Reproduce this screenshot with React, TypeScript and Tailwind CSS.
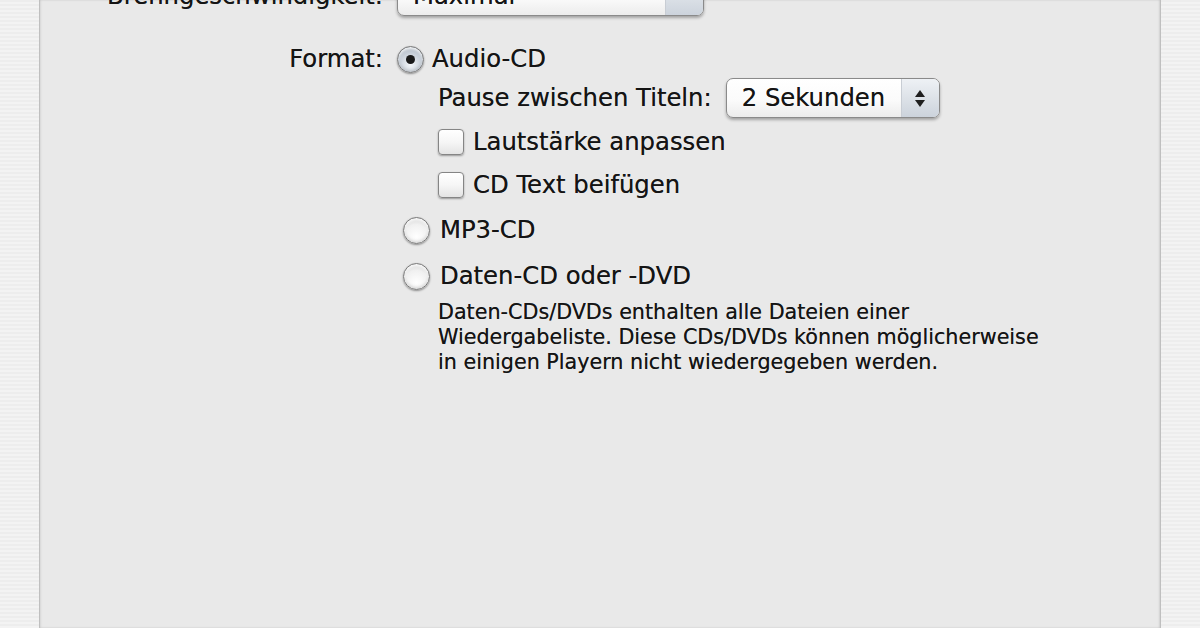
import React from "react";

const font = { fontFamily: '"DejaVu Sans", "Liberation Sans", sans-serif' };

function Radio({ checked = false }: { checked?: boolean }) {
  return (
    <span
      className={
        "flex h-[27px] w-[27px] shrink-0 items-center justify-center rounded-full border border-[#7a7a7a] shadow-[0_1px_2px_rgba(0,0,0,0.4),inset_0_2px_3px_rgba(255,255,255,0.9),inset_0_-2px_3px_rgba(0,0,0,0.12)] " +
        (checked
          ? "bg-[radial-gradient(circle_at_50%_70%,#f4f7fa_0%,#c6ced8_55%,#8a95a2_100%)]"
          : "bg-[radial-gradient(circle_at_50%_75%,#ffffff_0%,#f0f0f0_55%,#c4c4c4_100%)]")
      }
    >
      {checked && <span className="h-[9px] w-[9px] rounded-full bg-[#1a1a1a]" />}
    </span>
  );
}

function Checkbox() {
  return (
    <span className="h-[26px] w-[26px] shrink-0 rounded-[4px] border border-[#858585] bg-[linear-gradient(180deg,#ffffff_0%,#f6f6f6_50%,#e4e4e4_100%)] shadow-[0_1px_2px_rgba(0,0,0,0.35)]" />
  );
}

function Popup({
  label,
  width,
  stepper = false,
}: {
  label: string;
  width: string;
  stepper?: boolean;
}) {
  return (
    <div
      className={
        width +
        " flex h-[40px] shrink-0 overflow-hidden rounded-[7px] border border-[#8a8a8a] bg-[linear-gradient(180deg,#ffffff_0%,#fbfbfb_55%,#ececec_100%)] shadow-[0_2px_3px_rgba(0,0,0,0.3)]"
      }
    >
      <span className="flex flex-1 items-center pl-[15px] text-[24.3px] text-[#141414]">
        {label}
      </span>
      <span className="flex w-[38px] shrink-0 flex-col items-center justify-center gap-[3px] border-l border-[#c8cdd4] bg-[linear-gradient(180deg,#eef1f5_0%,#dde2e8_50%,#ccd3dc_100%)]">
        {stepper && (
          <svg width="10" height="7" viewBox="0 0 10 7">
            <path d="M5 0 L10 7 L0 7 Z" fill="#1f1f1f" />
          </svg>
        )}
        <svg width="10" height="7" viewBox="0 0 10 7">
          <path d="M0 0 L10 0 L5 7 Z" fill="#1f1f1f" />
        </svg>
      </span>
    </div>
  );
}

const strip =
  "w-[39px] shrink-0 bg-[repeating-linear-gradient(0deg,#f3f3f3_0px,#f3f3f3_2px,#ededed_2px,#ededed_4px)]";

export default function App() {
  return (
    <div
      className="flex h-[628px] w-[1200px] overflow-hidden bg-[#f1f1f1] text-[#141414] [text-shadow:0_0_0.6px_rgba(0,0,0,0.6)]"
      style={font}
    >
      <div className={strip} />
      <div className="w-[1122px] shrink-0 border-x border-[#bfbfbf] bg-[#e9e9e9] shadow-[inset_1px_0_2px_rgba(0,0,0,0.08),inset_-1px_0_2px_rgba(0,0,0,0.1)]">
        <div className="-mt-[24px] flex flex-col">
          {/* Brenngeschwindigkeit */}
          <div className="flex h-[40px] items-center">
            <span className="w-[343px] shrink-0 text-right text-[24.3px]">
              Brenngeschwindigkeit:
            </span>
            <div className="ml-[14px]">
              <Popup label="Maximal" width="w-[307px]" />
            </div>
          </div>

          {/* Format */}
          <div className="mt-[29px] flex h-[28px] items-center">
            <span className="w-[343px] shrink-0 text-right text-[24.3px]">Format:</span>
            <div className="ml-[14px] flex items-center gap-[8px]">
              <Radio checked />
              <span className="text-[24.3px]">Audio-CD</span>
            </div>
          </div>

          {/* Pause */}
          <div className="ml-[398px] mt-[5px] flex h-[40px] items-center gap-[14px]">
            <span className="text-[24.3px]">Pause zwischen Titeln:</span>
            <Popup label="2 Sekunden" width="w-[214px]" stepper />
          </div>

          {/* Checkboxes */}
          <div className="ml-[398px] mt-[10px] flex h-[28px] items-center gap-[9px]">
            <Checkbox />
            <span className="text-[24.3px]">Lautstärke anpassen</span>
          </div>
          <div className="ml-[398px] mt-[15px] flex h-[28px] items-center gap-[9px]">
            <Checkbox />
            <span className="text-[24.3px]">CD Text beifügen</span>
          </div>

          {/* MP3 */}
          <div className="ml-[363px] mt-[17px] flex h-[28px] items-center gap-[10px]">
            <Radio />
            <span className="text-[24.3px]">MP3-CD</span>
          </div>

          {/* Daten */}
          <div className="ml-[363px] mt-[18px] flex h-[28px] items-center gap-[10px]">
            <Radio />
            <span className="text-[24.3px]">Daten-CD oder -DVD</span>
          </div>

          <p className="ml-[398px] mt-[10px] w-[660px] text-[20.7px] leading-[25px]">
            Daten-CDs/DVDs enthalten alle Dateien einer
            <br />
            Wiedergabeliste. Diese CDs/DVDs können möglicherweise
            <br />
            in einigen Playern nicht wiedergegeben werden.
          </p>
        </div>
      </div>
      <div className={strip} />
    </div>
  );
}
